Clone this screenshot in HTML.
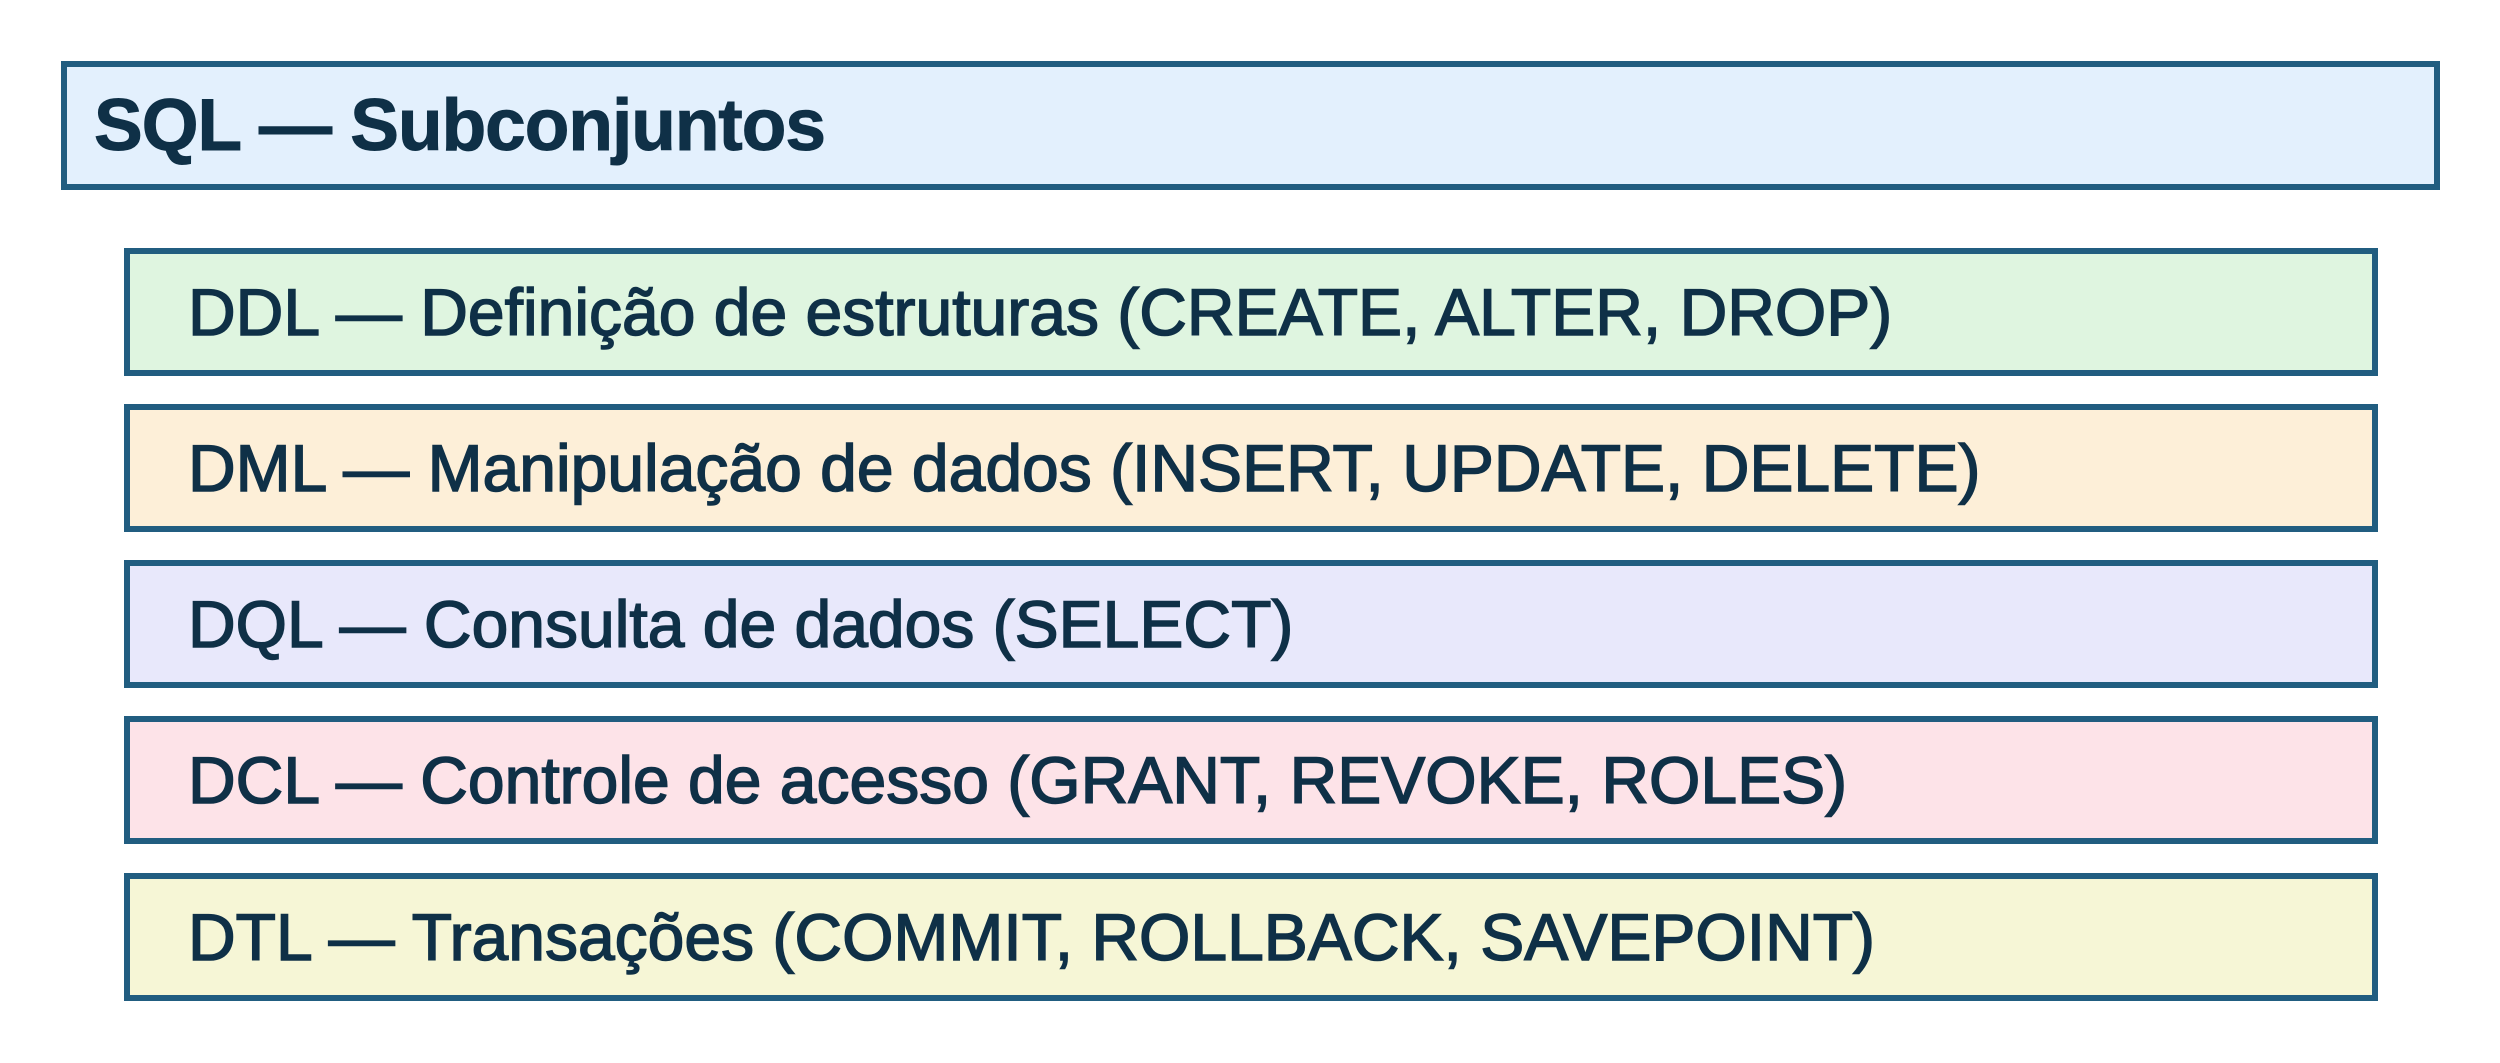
<!DOCTYPE html>
<html><head><meta charset="utf-8"><style>
html,body{margin:0;padding:0;background:#fff;width:2500px;height:1063px;overflow:hidden}
.b{position:absolute;box-sizing:border-box;border:6px solid #215d80;display:flex;align-items:center;color:#0f3047;font-family:"Liberation Sans",sans-serif;white-space:nowrap}
.h{left:61px;top:61px;width:2379px;height:129px;background:#e3f0fd;font-weight:bold;font-size:73px;padding-left:27px;letter-spacing:-1px;-webkit-text-stroke:1px #0f3047}
.r{left:124px;width:2254px;height:128px;font-size:66px;padding-left:58px;-webkit-text-stroke:1.5px #0f3047}
</style></head><body>
<div class="b h">SQL — Subconjuntos</div>
<div class="b r" style="top:248px;background:#dff5e0">DDL — Definição de estruturas (CREATE, ALTER, DROP)</div>
<div class="b r" style="top:404px;background:#fdefd8">DML — Manipulação de dados (INSERT, UPDATE, DELETE)</div>
<div class="b r" style="top:560px;background:#e8e8fb">DQL — Consulta de dados (SELECT)</div>
<div class="b r" style="top:716px;background:#fde3e8">DCL — Controle de acesso (GRANT, REVOKE, ROLES)</div>
<div class="b r" style="top:873px;background:#f6f6d6">DTL — Transações (COMMIT, ROLLBACK, SAVEPOINT)</div>
</body></html>
